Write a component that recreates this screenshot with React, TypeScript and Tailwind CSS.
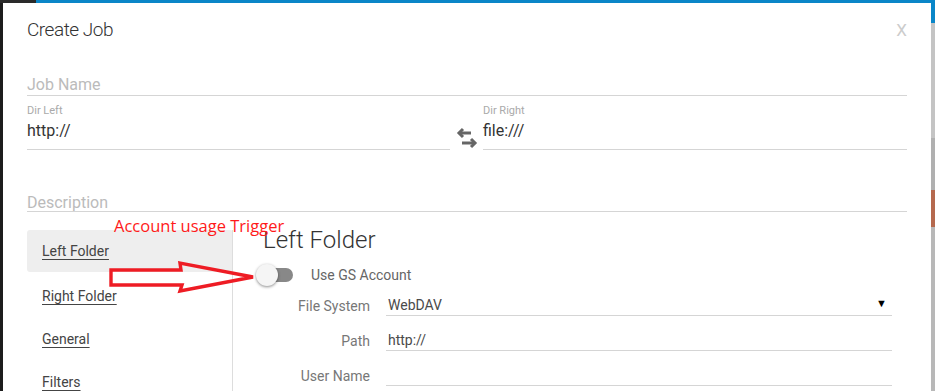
function Underline({ children, className = "" }: { children?: React.ReactNode; className?: string }) {
  return <div className={`border-b border-[#d5d5d5] ${className}`}>{children}</div>;
}

function SwapIcon() {
  return (
    <svg width="22" height="24" viewBox="0 0 22 24" fill="none" stroke="#666" strokeWidth="3" strokeLinecap="butt" strokeLinejoin="miter">
      <path d="M3 7H15" />
      <path d="M7 3L3 7L7 11" />
      <path d="M6 17H19" />
      <path d="M15 13L19 17L15 21" />
    </svg>
  );
}

function FormRow({ label, children }: { label: string; children?: React.ReactNode }) {
  return (
    <div className="flex items-end h-[35px]">
      <div className="w-[107px] text-right text-[14px] text-[#777] leading-[16px] pb-[2px]">{label}</div>
      <Underline className="ml-[16px] w-[506px] h-[28px] flex items-end justify-between text-[14px] text-[#4a4a4a] leading-[16px] pb-[2px] pl-[2px]">
        {children}
      </Underline>
    </div>
  );
}

export default function App() {
  return (
    <div
      className="relative w-[935px] h-[391px] overflow-hidden bg-[#1c1c1c] flex flex-col"
      style={{ fontFamily: "Roboto, 'Liberation Sans', sans-serif" }}
    >
      {/* page behind the dialog */}
      <div className="h-[3px] flex shrink-0">
        <div className="w-[36px] bg-[#2a2a2a]" />
        <div className="flex-1 bg-[#0a86c8]" />
      </div>

      <div className="flex flex-1 min-h-0">
        <div className="w-[3px] bg-[#1c1c1c]" />
        <div className="w-[928px] bg-white overflow-hidden pl-[24px] pr-[24px]">
          <div className="flex items-center justify-between h-[53px] pt-[2px]">
            <div className="text-[19px] text-[#333] font-light tracking-tight">Create Job</div>
            <div className="text-[17px] text-[#ccc]">X</div>
          </div>

          <Underline className="mt-[19px] h-[21px] text-[16px] text-[#bbb] leading-none pt-[2px] w-[880px]">
            Job Name
          </Underline>

          <div className="flex mt-[9px] w-[880px]">
            <div className="w-[423px]">
              <div className="text-[11px] text-[#aaa] leading-none">Dir Left</div>
              <Underline className="mt-[3px] h-[31px] text-[16px] text-[#333]">http://</Underline>
            </div>
            <div className="w-[33px] flex items-end justify-center mb-[0px]">
              <SwapIcon />
            </div>
            <div className="flex-1">
              <div className="text-[11px] text-[#aaa] leading-none">Dir Right</div>
              <Underline className="mt-[3px] h-[31px] text-[16px] text-[#333]">file:///</Underline>
            </div>
          </div>

          <Underline className="mt-[43px] h-[19px] text-[16px] text-[#bbb] leading-none pt-[2px] w-[880px]">
            Description
          </Underline>

          <div className="flex mt-[18px]">
            <div className="w-[205px] flex flex-col text-[14px] text-[#444]">
              <div className="h-[42px] bg-[#eeeeee] rounded-[3px] flex items-center pl-[15px] w-[206px]">
                <span className="underline underline-offset-[3px]">Left Folder</span>
              </div>
              <div className="h-[44px] flex items-center pl-[15px] pt-[4px]">
                <span className="underline underline-offset-[3px]">Right Folder</span>
              </div>
              <div className="h-[43px] flex items-center pl-[15px] pt-[4px]">
                <span className="underline underline-offset-[3px]">General</span>
              </div>
              <div className="h-[43px] flex items-center pl-[15px] pt-[4px]">
                <span className="underline underline-offset-[3px]">Filters</span>
              </div>
            </div>
            <div className="border-l border-[#ddd] flex-1 pl-[30px]">
              <div className="text-[24px] text-[#333] font-light leading-none mt-[-2px]">Left Folder</div>
              <div className="flex items-center mt-[11px] ml-[-7px] h-[24px]">
                <div className="relative w-[38px] h-[24px]">
                  <div className="absolute left-[9px] top-[5px] w-[28px] h-[14px] rounded-full bg-[#888]" />
                  <div className="absolute left-0 top-[1px] w-[22px] h-[22px] rounded-full bg-[#f5f5f5] shadow-[0_1px_3px_rgba(0,0,0,0.45)]" />
                </div>
                <div className="ml-[17px] text-[14px] text-[#666]">Use GS Account</div>
              </div>
              <div className="mt-[-6px]">
                <FormRow label="File System">
                  <span>WebDAV</span>
                  <span className="text-[11px] text-black mr-[5px] mb-[1px]">▼</span>
                </FormRow>
                <FormRow label="Path">
                  <span>http://</span>
                </FormRow>
                <FormRow label="User Name" />
              </div>
            </div>
          </div>
        </div>
        <div className="w-[4px] flex flex-col">
          <div className="h-[20px] bg-[#0a86c8]" />
          <div className="h-[115px] bg-[#c4c4c4]" />
          <div className="h-[52px] bg-[#b0b0b0]" />
          <div className="h-[37px] bg-[#b5694e]" />
          <div className="flex-1 bg-[#b8b8b8]" />
        </div>
      </div>

      {/* annotation drawn over the screenshot */}
      <div
        className="absolute left-[114px] top-[218px] text-[16.5px] text-[#ff1a1a] leading-none"
        style={{ fontFamily: "'Open Sans', 'Liberation Sans', sans-serif" }}
      >
        Account usage Trigger
      </div>
      <svg className="absolute left-[105px] top-[258px]" width="160" height="40" viewBox="0 0 160 40">
        <polygon
          points="6,12 76,12 75,5 148,19 75,33 77,27 6,27"
          fill="none"
          stroke="#ee1c24"
          strokeWidth="3.4"
          strokeLinejoin="miter"
        />
      </svg>
    </div>
  );
}
